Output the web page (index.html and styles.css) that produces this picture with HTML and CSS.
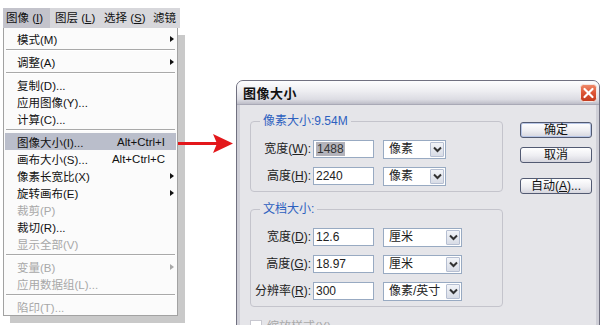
FILE: index.html
```html
<!DOCTYPE html>
<html lang="zh-CN">
<head>
<meta charset="utf-8">
<title>图像大小</title>
<link rel="stylesheet" href="styles.css">
</head>
<body>
<div class="menuwin">
  <div class="menubar">
    <div class="mb-item active">图像 (<u>I</u>)</div>
    <div class="mb-item">图层 (<u>L</u>)</div>
    <div class="mb-item">选择 (<u>S</u>)</div>
    <div class="mb-item">滤镜</div>
  </div>
  <div class="dropdown">
    <div class="mi sub"><span>模式(M)</span><i class="tri"></i></div>
    <div class="sep"></div>
    <div class="mi sub"><span>调整(A)</span><i class="tri"></i></div>
    <div class="sep"></div>
    <div class="mi"><span>复制(D)...</span></div>
    <div class="mi"><span>应用图像(Y)...</span></div>
    <div class="mi"><span>计算(C)...</span></div>
    <div class="sep"></div>
    <div class="mi hl"><span>图像大小(I)...</span><span class="sc">Alt+Ctrl+I</span></div>
    <div class="mi"><span>画布大小(S)...</span><span class="sc">Alt+Ctrl+C</span></div>
    <div class="mi sub"><span>像素长宽比(X)</span><i class="tri"></i></div>
    <div class="mi sub"><span>旋转画布(E)</span><i class="tri"></i></div>
    <div class="mi dis"><span>裁剪(P)</span></div>
    <div class="mi"><span>裁切(R)...</span></div>
    <div class="mi dis"><span>显示全部(V)</span></div>
    <div class="sep"></div>
    <div class="mi sub dis"><span>变量(B)</span><i class="tri"></i></div>
    <div class="mi dis"><span>应用数据组(L)...</span></div>
    <div class="sep"></div>
    <div class="mi dis"><span>陷印(T)...</span></div>
  </div>
</div>

<svg class="arrow" width="56" height="22" viewBox="0 0 56 22">
  <rect x="0" y="9" width="40" height="3" fill="#e3171b"/>
  <polygon points="35,1 55,10.5 35,20 39,10.5" fill="#e3171b"/>
</svg>

<div class="dialog">
  <div class="titlebar">
    <span class="title">图像大小</span>
    <svg class="close" width="17" height="18" viewBox="0 0 17 18">
      <defs>
        <linearGradient id="cg" x1="0" y1="0" x2="0" y2="1">
          <stop offset="0" stop-color="#f08c6c"/>
          <stop offset="0.5" stop-color="#dc5434"/>
          <stop offset="1" stop-color="#c23a1e"/>
        </linearGradient>
      </defs>
      <rect x="0.5" y="0.5" width="16" height="17" rx="3" fill="url(#cg)" stroke="#f4e6e2"/>
      <path d="M4.5 5 L12.5 13 M12.5 5 L4.5 13" stroke="#ffffff" stroke-width="2.2" stroke-linecap="round"/>
    </svg>
  </div>
  <div class="dbody">
    <div class="leftcol">
      <fieldset class="grp">
        <legend>像素大小:9.54M</legend>
        <div class="rows g1">
          <label class="lbl">宽度(<u>W</u>):</label>
          <div class="inp"><span class="selx">1488</span></div>
          <div class="sel"><span class="sv">像素</span><span class="dd"><svg width="9" height="7" viewBox="0 0 9 7"><path d="M1 1.5 L4.5 5 L8 1.5" fill="none" stroke="#333" stroke-width="2"/></svg></span></div>
          <label class="lbl">高度(<u>H</u>):</label>
          <div class="inp">2240</div>
          <div class="sel"><span class="sv">像素</span><span class="dd"><svg width="9" height="7" viewBox="0 0 9 7"><path d="M1 1.5 L4.5 5 L8 1.5" fill="none" stroke="#333" stroke-width="2"/></svg></span></div>
        </div>
      </fieldset>
      <fieldset class="grp grp2">
        <legend>文档大小:</legend>
        <div class="rows g2">
          <label class="lbl">宽度(<u>D</u>):</label>
          <div class="inp">12.6</div>
          <div class="sel"><span class="sv">厘米</span><span class="dd"><svg width="9" height="7" viewBox="0 0 9 7"><path d="M1 1.5 L4.5 5 L8 1.5" fill="none" stroke="#333" stroke-width="2"/></svg></span></div>
          <label class="lbl">高度(<u>G</u>):</label>
          <div class="inp">18.97</div>
          <div class="sel"><span class="sv">厘米</span><span class="dd"><svg width="9" height="7" viewBox="0 0 9 7"><path d="M1 1.5 L4.5 5 L8 1.5" fill="none" stroke="#333" stroke-width="2"/></svg></span></div>
          <label class="lbl">分辨率(<u>R</u>):</label>
          <div class="inp">300</div>
          <div class="sel"><span class="sv">像素/英寸</span><span class="dd"><svg width="9" height="7" viewBox="0 0 9 7"><path d="M1 1.5 L4.5 5 L8 1.5" fill="none" stroke="#333" stroke-width="2"/></svg></span></div>
        </div>
      </fieldset>
      <div class="chk"><span class="box"></span><span>缩放样式(<u>Y</u>)</span></div>
    </div>
    <div class="btncol">
      <div class="btn def">确定</div>
      <div class="btn b2">取消</div>
      <div class="btn b3">自动(<u>A</u>)...</div>
    </div>
  </div>
</div>
</body>
</html>
```

FILE: styles.css
```css
* { box-sizing: border-box; }
html, body { margin: 0; padding: 0; }
body {
  width: 600px;
  height: 325px;
  overflow: hidden;
  position: relative;
  background: #ffffff;
  font-family: "Liberation Sans", "Noto Sans CJK SC", sans-serif;
  font-size: 12px;
  color: #111;
}

/* ---------- menu window ---------- */
.menuwin {
  position: absolute;
  left: 3px;
  top: 8px;
  width: 177px;
}
.menubar {
  display: flex;
  height: 20px;
  background: #d7d7db;
  font-size: 11.5px;
}
.mb-item {
  width: 49px;
  padding-left: 3px;
  line-height: 20px;
  white-space: nowrap;
  overflow: hidden;
}
.mb-item:last-child { width: 30px; }
.mb-item.active { background: #c3c3cb; width: 47px; margin-right: 2px; }

.dropdown {
  width: 175px;
  background: #fbfbfb;
  border: 1px solid #a2a2a2;
  border-top: none;
  padding: 2px 1px 0;
  box-shadow: 7px 7px 0 #c9c9c9;
}
.mi {
  display: flex;
  align-items: center;
  height: 17px;
  padding: 0 2px 0 12px;
  font-size: 11.5px;
  white-space: nowrap;
}
.mi .sc { margin-left: auto; margin-right: 9px; }
.mi .tri {
  margin-left: auto;
  width: 0;
  height: 0;
  border-top: 3.5px solid transparent;
  border-bottom: 3.5px solid transparent;
  border-left: 4px solid #111;
}
.mi.hl { background: #babecb; }
.mi.dis { color: #a8a8a8; }
.mi.dis .tri { border-left-color: #a8a8a8; }
.sep {
  height: 6px;
  display: flex;
  align-items: center;
  padding: 0 1px;
}
.sep::before {
  content: "";
  flex: 1;
  border-top: 1px solid #a9a9a9;
  border-bottom: 1px solid #ffffff;
}

/* ---------- arrow ---------- */
.arrow {
  position: absolute;
  left: 178px;
  top: 133px;
}

/* ---------- dialog ---------- */
.dialog {
  position: absolute;
  left: 236px;
  top: 80px;
  width: 364px;
  height: 262px;
  border: 1px solid #707080;
  border-radius: 7px 7px 0 0;
  background: #cfcfd7;
  padding: 0 3px;
  overflow: hidden;
}
.titlebar {
  margin: 0 -3px;
  height: 24px;
  display: flex;
  align-items: center;
  padding: 0 2px 0 6px;
  background: linear-gradient(#fdfdfe, #ededf1 45%, #dcdce3 80%, #bdbdc8);
  border-bottom: 1px solid #a9a9b6;
}
.title {
  font-weight: bold;
  font-size: 13px;
  letter-spacing: 0.5px;
}
.close { margin-left: auto; display: block; }

.dbody {
  display: flex;
  align-items: flex-start;
  height: 240px;
  background: #e5e5e9;
  padding: 9px 0 0 10px;
}
.leftcol { width: 253px; }

.grp {
  margin: 0;
  min-width: 0;
  border: 1px solid #c4c4cc;
  border-radius: 4px;
  padding: 12px 0 6px 4px;
}
.grp legend {
  margin-left: 5px;
  padding: 0 3px;
  color: #2d60bf;
  font-size: 12px;
  line-height: 14px;
}
.grp2 { margin-top: 10px; }

.rows {
  display: grid;
  grid-template-columns: 56px 61px 70px;
  grid-auto-rows: 18px;
  column-gap: 2px;
  row-gap: 9px;
  align-items: center;
}
.rows.g2 { grid-template-columns: 56px 61px 86px; }
.rows .sel { margin-left: 7px; }

.lbl {
  text-align: right;
  white-space: nowrap;
  line-height: 18px;
  font-size: 12px;
  color: #222;
}
.inp {
  height: 18px;
  background: #fff;
  border: 1px solid #98aac2;
  padding-left: 2px;
  line-height: 16px;
  font-size: 12px;
  color: #222;
}
.selx { background: #b3b3bb; color: #333; padding: 0 1px; }
.sel {
  height: 19px;
  background: #fff;
  border: 1px solid #98aac2;
  display: flex;
  align-items: center;
  padding: 1px;
  font-size: 12px;
}
.sv { padding-left: 4px; flex: 1; line-height: 15px; color: #222; }
.dd {
  width: 14px;
  height: 15px;
  border: 1px solid #b6bfd2;
  border-radius: 1px;
  background: linear-gradient(#f2f4f8, #d8dce6);
  display: flex;
  align-items: center;
  justify-content: center;
}
.dd svg { display: block; }

.chk {
  display: flex;
  align-items: center;
  gap: 5px;
  margin-top: 10px;
  color: #a9a9a9;
  font-size: 12px;
}
.chk .box {
  width: 12px;
  height: 12px;
  background: #fff;
  border: 1px solid #c8c8d0;
}

.btncol {
  width: 72px;
  margin-left: 17px;
  margin-top: 8px;
  display: flex;
  flex-direction: column;
}
.btn {
  height: 16px;
  border: 1px solid #525a72;
  border-radius: 3px;
  background: linear-gradient(#ffffff, #eeeef2 55%, #d6d6de);
  text-align: center;
  font-size: 12px;
  line-height: 14px;
  color: #111;
}
.btn.def { box-shadow: inset 0 0 0 1px #b8c6e6; }
.btn.b2 { margin-top: 9px; }
.btn.b3 { margin-top: 15px; }
```
